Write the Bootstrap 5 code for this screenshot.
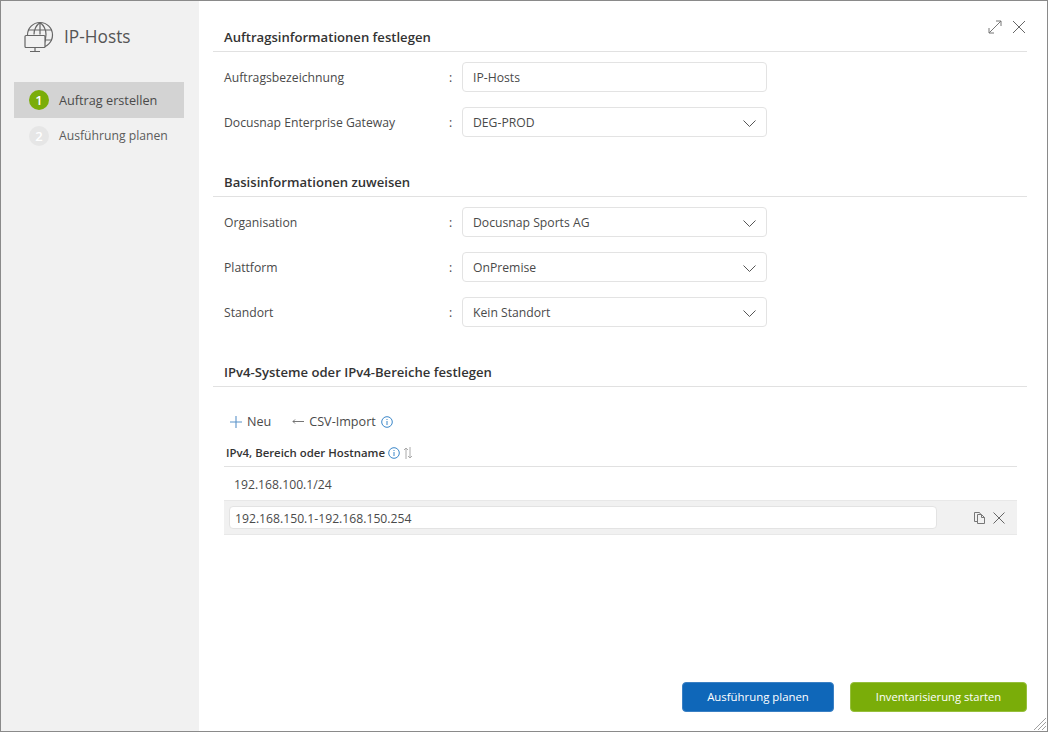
<!DOCTYPE html>
<html lang="de">
<head>
<meta charset="utf-8">
<title>IP-Hosts</title>
<link href="https://cdn.jsdelivr.net/npm/bootstrap@5.3.0/dist/css/bootstrap.min.css" rel="stylesheet">
<style>
html,body{height:100%;margin:0;overflow:hidden;background:#fff}
body{font-family:"Open Sans","Noto Sans",sans-serif;font-size:12.2px;color:#4a4a4a}
.shell{height:732px;width:1048px;border:1px solid #8a8a8a;position:relative}
.side{width:198px;background:#f1f1f1;flex:none}
.brand{height:81px;padding:20px 0 0 23px;gap:10px}
.brand span{font-size:17.3px;color:#555;line-height:32px}
.stepitem{margin:0 15px 0 13px;height:36px;padding-left:15px;gap:10px;color:#4a4a4a}
.stepitem.on{background:#d3d3d3;font-size:12.7px}
.stepitem.off{color:#5c5c5c}
.steptext{padding-top:1px}
.stepnum{width:20px;height:20px;border-radius:50%;background:#7aad09;color:#fff;font-weight:600;font-size:13px;line-height:20px;text-align:center}
.stepitem.off .stepnum{background:#e6e6e6}
.mainpane{min-width:0;padding:0 20px 19px 14px}
.sechead{font-weight:600;font-size:13.1px;color:#333;border-bottom:1px solid #e1e1e1;height:24px;padding-left:11px;line-height:18px}
.top1{margin-top:27px}
.top2{margin-top:36px}
.top3{margin-top:36px}
.formrow{height:30px;margin-top:15px;padding-left:11px}
.sechead + .formrow{margin-top:10px}
.flabel{width:225px;padding-top:2px}
.fcolon{width:13px;padding-top:2px}
.fbox{width:305px;height:30px;border:1px solid #e3e3e3;border-radius:4px;padding:2px 10px 0;color:#4a4a4a;font-size:12.2px;background:#fff;box-shadow:none}
input.fbox{padding-top:0}
.fbox:focus{outline:0}
.toolbar{margin-top:23px;margin-left:17px;height:24px;gap:21px;font-size:12.6px}
.toolbar .tbtn{gap:5px}
.tablewrap{margin:0 10px 0 11px}
.thead-row{height:33px;border-bottom:1px solid #e1e1e1;padding:5px 0 0 2px;gap:3px;font-weight:600;font-size:11.4px;color:#333}
.trow{height:34px;padding:3px 0 0 10px;border-bottom:1px solid #e8e8e8}
.trow2{height:34px;background:#f1f1f1;padding:0 12px 0 5px;border-bottom:1px solid #e8e8e8}
.cellinput{height:23px;width:708px;border:1px solid #e3e3e3;border-radius:4px;background:#fff;padding:1px 5px 0;font-size:12.2px;color:#4a4a4a}
.actions{margin-left:auto;gap:8px}
.footbar{margin-top:auto;gap:16px}
.dbtn{height:30px;border-radius:4px;color:#fff;padding:0;border:1px solid #d0d0d0}
.dbtn.blue{width:152px;background:#0f67b9;border-color:#3a80c4;font-size:11.4px}
.dbtn.green{width:177px;background:#7aad09;border-color:#96bf3c;font-size:11.2px}
.dbtn:hover{color:#fff}
.topicons{position:absolute;top:19px;right:21px;gap:10px}
.grip{position:absolute;right:1px;bottom:1px}
svg{display:block;flex:none}
</style>
</head>
<body>
<div class="shell d-flex">
  <aside class="side d-flex flex-column">
    <div class="brand d-flex align-items-start">
      <svg width="30" height="32" viewBox="0 0 30 32" fill="none" stroke="#666" stroke-width="1.2"><circle cx="16" cy="14" r="12.500"/><path d="M4 9h24M5 19h23M16 1.500v12M16 1.500c-4 3-6 7-6 12M16 1.500c4 3 6 7 6 12c0 4-1 8-3 12"/><rect x="1" y="14.500" width="20" height="12" rx="1" fill="#f1f1f1"/><path d="M11 26.500v4M6 30.500h10"/></svg>
      <span>IP-Hosts</span>
    </div>
    <div class="stepitem on d-flex align-items-center"><div class="stepnum">1</div><div class="steptext">Auftrag erstellen</div></div>
    <div class="stepitem off d-flex align-items-center"><div class="stepnum">2</div><div class="steptext">Ausführung planen</div></div>
  </aside>
  <main class="mainpane flex-grow-1 d-flex flex-column">
    <div class="sechead top1">Auftragsinformationen festlegen</div>
    <div class="formrow d-flex align-items-center"><div class="flabel">Auftragsbezeichnung</div><div class="fcolon">:</div><input class="fbox" value="IP-Hosts"></div>
    <div class="formrow d-flex align-items-center"><div class="flabel">Docusnap Enterprise Gateway</div><div class="fcolon">:</div><div class="fbox d-flex align-items-center justify-content-between">DEG-PROD<svg width="13" height="7" viewBox="0 0 13 7" fill="none" stroke="#555"><path d="M.5.500l6 6 6-6"/></svg></div></div>

    <div class="sechead top2">Basisinformationen zuweisen</div>
    <div class="formrow d-flex align-items-center"><div class="flabel">Organisation</div><div class="fcolon">:</div><div class="fbox d-flex align-items-center justify-content-between">Docusnap Sports AG<svg width="13" height="7" viewBox="0 0 13 7" fill="none" stroke="#555"><path d="M.5.500l6 6 6-6"/></svg></div></div>
    <div class="formrow d-flex align-items-center"><div class="flabel">Plattform</div><div class="fcolon">:</div><div class="fbox d-flex align-items-center justify-content-between">OnPremise<svg width="13" height="7" viewBox="0 0 13 7" fill="none" stroke="#555"><path d="M.5.500l6 6 6-6"/></svg></div></div>
    <div class="formrow d-flex align-items-center"><div class="flabel">Standort</div><div class="fcolon">:</div><div class="fbox d-flex align-items-center justify-content-between">Kein Standort<svg width="13" height="7" viewBox="0 0 13 7" fill="none" stroke="#555"><path d="M.5.500l6 6 6-6"/></svg></div></div>

    <div class="sechead top3">IPv4-Systeme oder IPv4-Bereiche festlegen</div>
    <div class="toolbar d-flex align-items-center">
      <div class="tbtn d-flex align-items-center"><svg width="12" height="12" viewBox="0 0 12 12" stroke="#5b93c9" stroke-width="1.1"><path d="M6 0v12M0 6h12"/></svg><span>Neu</span></div>
      <div class="tbtn d-flex align-items-center"><svg width="12" height="5" viewBox="0 0 12 5" fill="none" stroke="#666" stroke-width=".9"><path d="M12 2.500H1M3 .5L1 2.500 3 4.500"/></svg><span>CSV-Import</span><svg width="12" height="12" viewBox="0 0 12 12" fill="none" stroke="#3a86c8"><circle cx="6" cy="6" r="5.300"/><path d="M6 5v4M6 3v1"/></svg></div>
    </div>
    <div class="tablewrap">
      <div class="thead-row d-flex align-items-center"><span>IPv4, Bereich oder Hostname</span><svg width="12" height="12" viewBox="0 0 12 12" fill="none" stroke="#3a86c8"><circle cx="6" cy="6" r="5.300"/><path d="M6 5v4M6 3v1"/></svg><svg width="10" height="12" viewBox="0 0 10 12" fill="none" stroke="#aaa"><path d="M3 12V1M1 3l2-2 2 2M7 0v11M5 9l2 2 2-2"/></svg></div>
      <div class="trow d-flex align-items-center">192.168.100.1/24</div>
      <div class="trow2 d-flex align-items-center">
        <input class="cellinput" value="192.168.150.1-192.168.150.254">
        <div class="actions d-flex align-items-center">
          <svg width="11" height="12" viewBox="0 0 11 12" fill="none" stroke="#777"><path d="M3.500 9.500h-3V.5h5l1 1.500"/><path d="M3.500 2.500h4l3 3v6h-7zM7.500 2.500v3h3"/></svg>
          <svg width="12" height="12" viewBox="0 0 12 12" stroke="#666"><path d="M.5.500l11 11M11.500.500l-11 11"/></svg>
        </div>
      </div>
    </div>
    <div class="footbar d-flex justify-content-end">
      <button type="button" class="btn dbtn blue">Ausführung planen</button>
      <button type="button" class="btn dbtn green">Inventarisierung starten</button>
    </div>
  </main>
  <div class="topicons d-flex align-items-center">
    <svg width="14" height="14" viewBox="0 0 14 14" fill="none" stroke="#777"><path d="M1 13L13 1M8 1h5v5M1 8v5h5"/></svg>
    <svg width="14" height="14" viewBox="0 0 14 14" stroke="#666"><path d="M1 1l12 12M13 1L1 13"/></svg>
  </div>
  <svg class="grip" width="13" height="13" viewBox="0 0 13 13" stroke="#888" stroke-width=".8"><path d="M1 13L13 1M5 13l8-8M9 13l4-4"/></svg>
</div>
</body>
</html>
